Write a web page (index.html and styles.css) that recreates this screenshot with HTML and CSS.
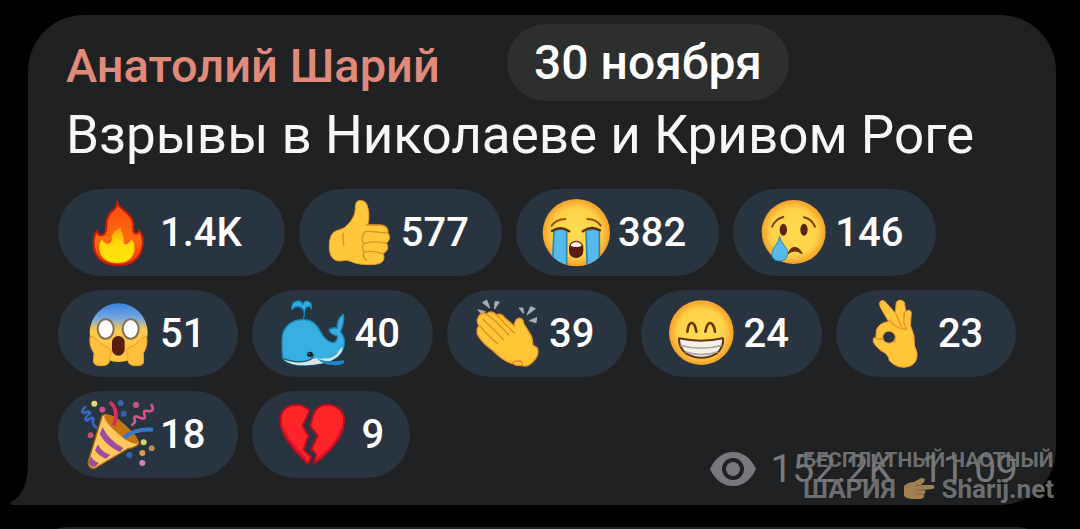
FILE: index.html
```html
<!DOCTYPE html>
<html lang="ru">
<head>
<meta charset="utf-8">
<meta name="viewport" content="width=device-width, initial-scale=1">
<title>Анатолий Шарий</title>
<link rel="stylesheet" href="styles.css">
</head>
<body>
<main class="chat">
  <article class="bubble">
    <svg class="tail" viewBox="0 0 40 52" aria-hidden="true"><path d="M18 0V8C18 27 13 41 1 47Q-1 50 3 50H40V0Z" fill="#202123"/></svg>
    <h1 class="author">Анатолий Шарий</h1>
    <p class="message">Взрывы в Николаеве и Кривом Роге</p>
    <div class="reactions">
      <button class="pill pill-wide" type="button">
        <svg class="emoji" viewBox="91 39 234 234" aria-hidden="true">
          <defs><linearGradient id="flame" x1="0" y1="0" x2="0" y2="1"><stop offset="0" stop-color="#ff4a10"/><stop offset=".6" stop-color="#ff6a0c"/><stop offset="1" stop-color="#f63b08"/></linearGradient>
          <linearGradient id="core" x1="0" y1="0" x2="0" y2="1"><stop offset="0" stop-color="#ff9a0a"/><stop offset=".45" stop-color="#ffd90a"/><stop offset="1" stop-color="#ffe60a"/></linearGradient></defs>
          <path d="M202 61C205 78 219 84 229 93C242 105 253 117 251 136C249 151 255 159 260 158C267 157 267 151 269 148C278 162 283 178 278 198C273 226 251 253 206 252C160 253 137 228 133 200C130 181 133 162 142 149C143 158 148 164 156 163C170 160 169 148 170 130C171 108 181 94 193 86C201 80 203 71 202 61Z" fill="url(#flame)" stroke="#c81c08" stroke-width="6" stroke-linejoin="round"/>
          <path d="M214 137C210 147 224 162 222 181C221 194 235 194 244 177C252 177 256 194 254 209C250 232 232 246 204 246C175 246 155 234 150 210C147 194 150 181 158 174C162 185 172 193 181 187C192 179 180 164 195 151C202 146 209 142 214 137Z" fill="url(#core)"/>
        </svg>
        <span class="count">1.4K</span>
      </button>
      <button class="pill" type="button">
        <svg class="emoji" viewBox="91 39 234 234" aria-hidden="true">
          <path d="M210 59C198 57 194 67 194 79C194 101 186 115 172 130C163 141 154 144 144 147C125 151 116 168 116 194C115 223 126 239 145 240C159 241 166 235 177 240C195 249 216 251 241 251C263 251 279 245 280 230C280 224 278 220 276 218C291 213 295 196 287 187C298 178 299 164 291 155C294 142 283 133 267 133L231 132C236 116 236 94 230 74C226 63 220 59 210 59Z" fill="#ffc83a" stroke="#ee9b28" stroke-width="3"/>
          <path d="M226 132H268Q294 134 291 155M217 162Q217 149 238 151L288 156M219 188Q250 178 287 187M220 213Q247 208 276 218M218 163Q210 174 219 187Q210 199 220 213Q213 230 228 238M158 157Q155 177 160 193" fill="none" stroke="#df912a" stroke-width="4" stroke-linecap="round"/>
        </svg>
        <span class="count">577</span>
      </button>
      <button class="pill" type="button">
        <svg class="emoji" viewBox="82 39 234 234" aria-hidden="true">
          <defs><radialGradient id="face"><stop offset="0" stop-color="#ffdc50"/><stop offset=".72" stop-color="#ffd248"/><stop offset="1" stop-color="#f5a02c"/></radialGradient>
          <clipPath id="sob"><circle cx="197" cy="155" r="101"/></clipPath></defs>
          <circle cx="197" cy="155" r="101" fill="url(#face)"/>
          <g clip-path="url(#sob)"><path d="M130 148Q149 141 168 149V265H125Z" fill="#58b9ec" stroke="#2686b6" stroke-width="5"/><path d="M226 149Q247 142 266 149V265H230Z" fill="#58b9ec" stroke="#2686b6" stroke-width="5"/></g>
          <path d="M123 134Q138 114 164 114M230 114Q257 114 270 134" fill="none" stroke="#9a4d12" stroke-width="6" stroke-linecap="round"/>
          <path d="M124 150Q151 132 176 151M216 151Q242 132 268 148" fill="none" stroke="#5d2b0b" stroke-width="7" stroke-linecap="round"/>
          <rect x="175" y="179" width="43" height="52" rx="21" fill="#591b0e"/><path d="M181 190Q197 175 212 190V196Q197 200 181 196Z" fill="#fff6eb"/>
        </svg>
        <span class="count">382</span>
      </button>
      <button class="pill" type="button">
        <svg class="emoji" viewBox="732 39 234 234" aria-hidden="true">
          <circle cx="848" cy="153" r="96" fill="url(#face)"/>
          <path d="M783 137Q794 113 817 108M879 109Q902 114 912 137" fill="none" stroke="#7a3e0e" stroke-width="6" stroke-linecap="round"/>
          <ellipse cx="817" cy="146" rx="11" ry="18" fill="#5b230b"/><ellipse cx="879" cy="146" rx="11" ry="18" fill="#5b230b"/>
          <path d="M832 217Q850 181 873 217Q851 202 832 217Z" fill="#673006" stroke="#673006" stroke-width="4" stroke-linejoin="round"/>
          <path d="M806 166C808 187 832 199 830 218C829 234 817 240 806 240C791 240 781 231 783 216C785 199 803 188 806 166Z" fill="#58b9ea" stroke="#208bbb" stroke-width="3"/>
        </svg>
        <span class="count">146</span>
      </button>
      <button class="pill" type="button">
        <svg class="emoji" viewBox="91 28 234 234" aria-hidden="true">
          <defs><linearGradient id="fear" x1="0" y1="0" x2="0" y2="1"><stop offset="0" stop-color="#3a82e0"/><stop offset=".26" stop-color="#77aade"/><stop offset=".46" stop-color="#fdca4d"/><stop offset="1" stop-color="#ffc641"/></linearGradient></defs>
          <ellipse cx="207" cy="141" rx="87" ry="88" fill="url(#fear)"/>
          <ellipse cx="168" cy="130" rx="24" ry="29" fill="#fff" stroke="#876d50" stroke-width="6"/><ellipse cx="243" cy="130" rx="24" ry="29" fill="#fff" stroke="#876d50" stroke-width="6"/>
          <rect x="187" y="151" width="38" height="59" rx="19" fill="#591e10"/>
          <path d="M122 151Q133 153 147 168Q162 181 178 187Q188 195 184 207Q178 211 180 221Q180 239 160 240Q132 242 131 227L133 203Q116 177 122 151Z" fill="#ffc13d" stroke="#e99b32" stroke-width="3"/>
          <path d="M290 151Q279 153 266 168Q252 181 237 187Q227 195 231 207Q238 211 234 221Q234 239 255 240Q283 242 282 227L281 203Q297 177 290 151Z" fill="#ffc13d" stroke="#e99b32" stroke-width="3"/>
        </svg>
        <span class="count">51</span>
      </button>
      <button class="pill" type="button">
        <svg class="emoji" viewBox="88 28 234 234" aria-hidden="true">
          <path d="M176 102Q183 78 174 69Q157 55 141 72Q141 50 154 47Q168 42 174 57Q181 41 194 49Q202 52 200 69Q193 56 183 67" fill="#32afe0" stroke="#1188b7" stroke-width="4" stroke-linejoin="round"/>
          <path d="M114 219Q111 193 112 160C114 118 146 101 178 102C215 103 222 132 239 155Q251 169 267 171Q279 165 279 151Q257 147 253 132Q267 123 278 128Q276 98 296 86Q301 108 287 138Q302 156 299 178C293 210 270 224 220 234C175 244 139 241 114 219Z" fill="#38afe0" stroke="#1685b4" stroke-width="4" stroke-linejoin="round"/>
          <path d="M114 219Q146 234 188 227Q203 219 216 218Q228 221 241 218Q271 220 285 192L295 184Q290 219 236 233Q145 250 114 219Z" fill="#d9e5e3"/>
          <path d="M114 218Q149 232 180 227Q203 224 208 207" fill="none" stroke="#185879" stroke-width="4"/>
          <path d="M218 219Q247 231 297 224Q304 233 284 238Q240 242 218 219Z" fill="#1689d0"/>
          <ellipse cx="196" cy="206" rx="9" ry="8" fill="#171e29"/><circle cx="193" cy="204" r="2" fill="#63c0e4"/>
        </svg>
        <span class="count">40</span>
      </button>
      <button class="pill" type="button">
        <svg class="emoji" viewBox="84 28 234 234" aria-hidden="true">
          <path d="M111 72L133 78L121 85ZM125 51L137 43L146 67ZM162 48L175 49L161 70ZM234 67L246 67L247 83ZM269 63L283 69L258 88ZM265 105L287 96L285 111Z" fill="#aaaeb1" stroke="#aaaeb1" stroke-width="3" stroke-linejoin="round"/>
          <path d="M112 95Q119 79 137 84Q151 72 166 87Q181 82 191 96L220 121Q222 96 238 98Q248 101 247 112L270 149Q276 163 275 178L289 187Q296 208 277 227Q259 247 241 239Q224 240 216 234Q188 228 155 194Q122 172 109 145Q106 127 114 120Q104 105 112 95Z" fill="#ffc735" stroke="#ee912c" stroke-width="4"/>
          <path d="M135 86Q155 94 203 148M126 101Q148 121 187 162M117 120Q137 148 170 174M167 89L220 142M214 232Q239 217 245 235" fill="none" stroke="#e88925" stroke-width="4" stroke-linecap="round"/>
        </svg>
        <span class="count">39</span>
      </button>
      <button class="pill" type="button">
        <svg class="emoji" viewBox="80 28 234 234" aria-hidden="true">
          <circle cx="195" cy="141" r="97" fill="url(#face)"/>
          <path d="M153 138Q156 113 165 112Q176 111 180 138M207 138Q212 111 222 112Q232 114 236 138" fill="none" stroke="#6a330b" stroke-width="8" stroke-linecap="round"/>
          <path d="M128 158Q194 172 260 158Q263 184 241 203Q196 230 149 203Q127 186 128 158Z" fill="#f4f1ed" stroke="#643211" stroke-width="6" stroke-linejoin="round"/>
          <path d="M132 179Q194 196 257 179M147 198Q195 215 245 198" fill="none" stroke="#ada49a" stroke-width="5"/>
        </svg>
        <span class="count">24</span>
      </button>
      <button class="pill" type="button">
        <svg class="emoji" viewBox="662 28 234 234" aria-hidden="true">
          <path fill-rule="evenodd" d="M728 48Q738 40 747 52L774 82L777 50Q786 37 801 49L805 77Q819 69 822 81L819 119Q834 150 831 178L839 201Q842 231 817 242Q784 253 756 225Q754 205 731 195L715 180Q703 167 709 157L716 156L717 133Q728 109 754 108L731 68Q724 56 728 48ZM736 154A19 18 0 1 0 774 155A19 18 0 1 0 736 154Z" fill="#ffc63a" stroke="#f39b30" stroke-width="3"/>
          <path d="M756 103Q771 127 806 132M776 86L793 124M801 79L799 109L807 131M715 157Q726 162 737 160M773 159L773 170" fill="none" stroke="#e98b29" stroke-width="4" stroke-linecap="round"/>
        </svg>
        <span class="count">23</span>
      </button>
      <button class="pill" type="button">
        <svg class="emoji" viewBox="91 31 234 234" aria-hidden="true">
          <path d="M158 89Q179 80 215 112Q267 151 267 176Q254 187 235 189L135 248Q117 249 115 231Z" fill="#ffc85e" stroke="#a7660e" stroke-width="4"/>
          <path d="M164 91Q187 80 223 115Q263 153 264 174Q244 177 209 147Q166 112 164 91Z" fill="#c37512"/>
          <path d="M159 125Q178 165 221 187L211 199Q170 181 150 145ZM145 176Q155 200 182 208L169 219Q148 213 136 193ZM124 212Q132 227 148 232L136 243Q120 246 117 229Z" fill="#9b4e9d"/>
          <path d="M192 120Q210 72 180 50" fill="none" stroke="#d92f5e" stroke-width="11"/><path d="M222 157Q255 128 310 132" fill="none" stroke="#3975ca" stroke-width="12"/>
          <path d="M109 62Q90 78 103 82Q116 74 121 82Q100 101 112 105Q130 91 131 100Q125 117 142 127" fill="none" stroke="#3567c4" stroke-width="8"/>
          <path d="M304 55Q318 76 297 77Q278 70 285 90Q288 105 266 94Q249 87 256 106Q255 113 245 119" fill="none" stroke="#d85383" stroke-width="8"/>
          <g><circle cx="134" cy="54" r="9" fill="#e1d876"/><circle cx="158" cy="72" r="9" fill="#c45384"/><circle cx="213" cy="52" r="9" fill="#3564ae"/><circle cx="222" cy="84" r="9" fill="#3460aa"/><circle cx="259" cy="58" r="9" fill="#c45384"/><circle cx="123" cy="149" r="9" fill="#bd5179"/><circle cx="282" cy="170" r="9" fill="#cfd371"/><circle cx="306" cy="188" r="9" fill="#bb8c59"/><circle cx="278" cy="202" r="9" fill="#d99a52"/><circle cx="239" cy="208" r="9" fill="#2e67ad"/><circle cx="278" cy="232" r="9" fill="#d281b9"/></g>
        </svg>
        <span class="count">18</span>
      </button>
      <button class="pill pill-narrow" type="button">
        <svg class="emoji" viewBox="672 31 234 234" aria-hidden="true">
          <path d="M779 75Q756 50 723 60Q688 70 692 113C696 155 736 199 774 235L784 214L761 192L775 151L758 120Z" fill="#ff2428" stroke="#b80d20" stroke-width="6" stroke-linejoin="round"/>
          <path d="M794 76Q818 49 849 60Q886 72 882 113C878 158 834 206 791 234L799 207L784 190L803 150L780 121Z" fill="#ff2428" stroke="#b80d20" stroke-width="6" stroke-linejoin="round"/>
          <path d="M697 123Q713 165 770 222M876 127Q853 185 801 221" fill="none" stroke="#d7172a" stroke-width="6"/>
        </svg>
        <span class="count">9</span>
      </button>
      <div class="meta">
        <svg class="eye" viewBox="0 0 46 34" aria-hidden="true"><path fill-rule="evenodd" d="M0 17Q8 0 23 0T46 17Q38 34 23 34T0 17ZM12 17A11 11 0 1 0 34 17A11 11 0 1 0 12 17Z" fill="#77797c"/><circle cx="23" cy="17" r="7" fill="#77797c"/></svg>
        <span>152.2K</span>
        <time datetime="11:09">11:09</time>
      </div>
    </div>
    <aside class="watermark">
      <div>БЕСПЛАТНЫЙ ЧАСТНЫЙ</div>
      <div class="watermark-site"><span>ШАРИЯ</span>
        <svg class="hand" viewBox="0 0 32 22" aria-hidden="true"><path d="M1 8Q5 4 11 4L18 0Q24 0 21 4L18 7H30Q33 9 30 11L21 12Q24 14 21 16Q22 20 18 21H9Q4 21 1 18Z" fill="#a08050"/><path d="M13 12H21M13 16H20M12 8L18 7" fill="none" stroke="#84673a" stroke-width="1"/></svg>
        <span>Sharij.net</span></div>
    </aside>
  </article>
  <time class="date" datetime="11-30">30 ноября</time>
  <div class="next-bubble"></div>
</main>
</body>
</html>
```
FILE: styles.css
```css
* { box-sizing: border-box; }
body {
  margin: 0;
  background: #000;
  color: #fff;
  font-family: Roboto, "Noto Sans", sans-serif;
}
.chat {
  position: relative;
  min-height: 100vh;
  padding: 15px 24px 0 28px;
  overflow: hidden;
}
.bubble {
  position: relative;
  padding: 19px 38px 27px 30px;
  border-radius: 56px 56px 56px 0;
  background: #202123;
}
.tail {
  position: absolute;
  left: -18px;
  bottom: -2px;
  width: 40px;
  height: 52px;
}
.author {
  margin: 0 8px;
  color: #e08a7b;
  font-size: 47px;
  font-weight: 500;
  line-height: 64px;
}
.message {
  margin: 0 8px 16px;
  color: #f7f7f9;
  font-size: 53px;
  line-height: 75px;
}
.date {
  position: absolute;
  top: 24px;
  left: 60%;
  padding: 0 27px;
  border-radius: 39px;
  background: #2d2e2e;
  font-size: 48px;
  font-weight: 500;
  line-height: 77px;
  white-space: nowrap;
  transform: translateX(-50%);
}
.reactions {
  position: relative;
  display: flex;
  flex-wrap: wrap;
  gap: 14px;
}
.pill {
  display: flex;
  align-items: center;
  gap: 2px;
  height: 87px;
  padding: 0 33px 0 22px;
  border: 0;
  border-radius: 44px;
  background: #28343f;
  color: #fff;
  font: 500 40px/48px Roboto, "Noto Sans", sans-serif;
}
.pill-wide { padding-right: 43px; }
.pill-narrow { gap: 9px; padding-right: 26px; }
.emoji { flex: none; width: 78px; height: 78px; }
.meta {
  display: flex;
  align-items: center;
  align-self: flex-end;
  gap: 14px;
  margin-left: auto;
  margin-bottom: -14px;
  color: #77797c;
  font-size: 39px;
  line-height: 46px;
}
.meta time { margin-left: 14px; }
.eye { width: 46px; height: 34px; }
.watermark {
  position: absolute;
  right: 2px;
  bottom: 0;
  width: 251px;
  color: rgba(136, 138, 141, 0.75);
  font-size: 21px;
  font-weight: 700;
  line-height: 26px;
  text-shadow: 0 0 2px rgba(20, 21, 23, 0.6);
  white-space: nowrap;
}
.watermark-site {
  display: flex;
  align-items: center;
  justify-content: space-between;
  font-size: 26px;
  line-height: 32px;
}
.hand { width: 32px; height: 22px; }
.next-bubble {
  height: 40px;
  margin: 22px 0 -40px;
  border-radius: 40px 40px 0 0;
  background: #202123;
}
```
